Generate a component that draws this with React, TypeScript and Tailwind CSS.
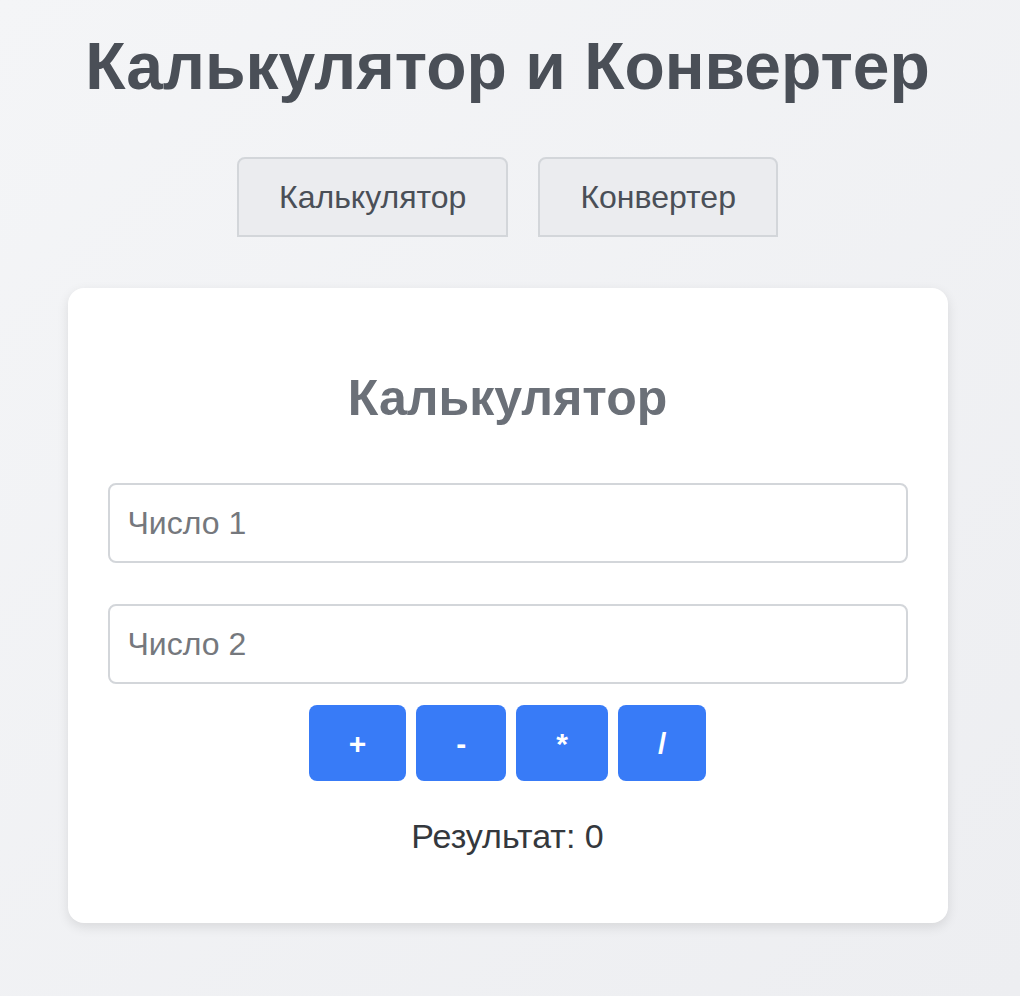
import React from "react";

export default function App() {
  const ops = ["+", "-", "*", "/"];
  return (
    <div
      className="min-h-[996px] w-full pr-[5px] flex flex-col items-center bg-gradient-to-br from-[#f4f5f7] to-[#edeef1]"
      style={{ fontFamily: '"Liberation Sans", Arial, sans-serif' }}
    >
      <h1 className="mt-[33px] text-[66px] leading-[66px] font-bold text-[#4a4f57]">
        Калькулятор и Конвертер
      </h1>
      <div className="mt-[58px] flex gap-[30px]">
        <button className="h-[80px] px-[40px] border-2 border-[#d3d6da] rounded-t-[8px] bg-[#ebecef] text-[32px] leading-[36px] text-[#4a4f57]">
          Калькулятор
        </button>
        <button className="h-[80px] px-[40px] border-2 border-[#d3d6da] rounded-t-[8px] bg-[#ebecef] text-[32px] leading-[36px] text-[#4a4f57]">
          Конвертер
        </button>
      </div>
      <div className="mt-[51px] w-[880px] rounded-[16px] bg-white shadow-[0_4px_12px_rgba(0,0,0,0.1)] px-[40px] pt-[85px] pb-[70px] flex flex-col items-center">
        <h2 className="text-[50px] leading-[50px] font-bold text-[#6b7078]">Калькулятор</h2>
        <input
          className="mt-[60px] w-full h-[80px] border-2 border-[#d3d6da] rounded-[8px] px-[18px] text-[32px] text-[#333] placeholder:text-[#75787d] outline-none"
          placeholder="Число 1"
        />
        <input
          className="mt-[41px] w-full h-[80px] border-2 border-[#d3d6da] rounded-[8px] px-[18px] text-[32px] text-[#333] placeholder:text-[#75787d] outline-none"
          placeholder="Число 2"
        />
        <div className="mt-[21px] flex gap-[10px]">
          {ops.map((o) => (
            <button
              key={o}
              className="h-[76px] px-[40px] rounded-[8px] bg-[#387bf7] text-white text-[30px] font-bold"
            >
              {o}
            </button>
          ))}
        </div>
        <p className="mt-[38px] text-[34px] leading-[34px] text-[#34383d]">Результат: 0</p>
      </div>
    </div>
  );
}
